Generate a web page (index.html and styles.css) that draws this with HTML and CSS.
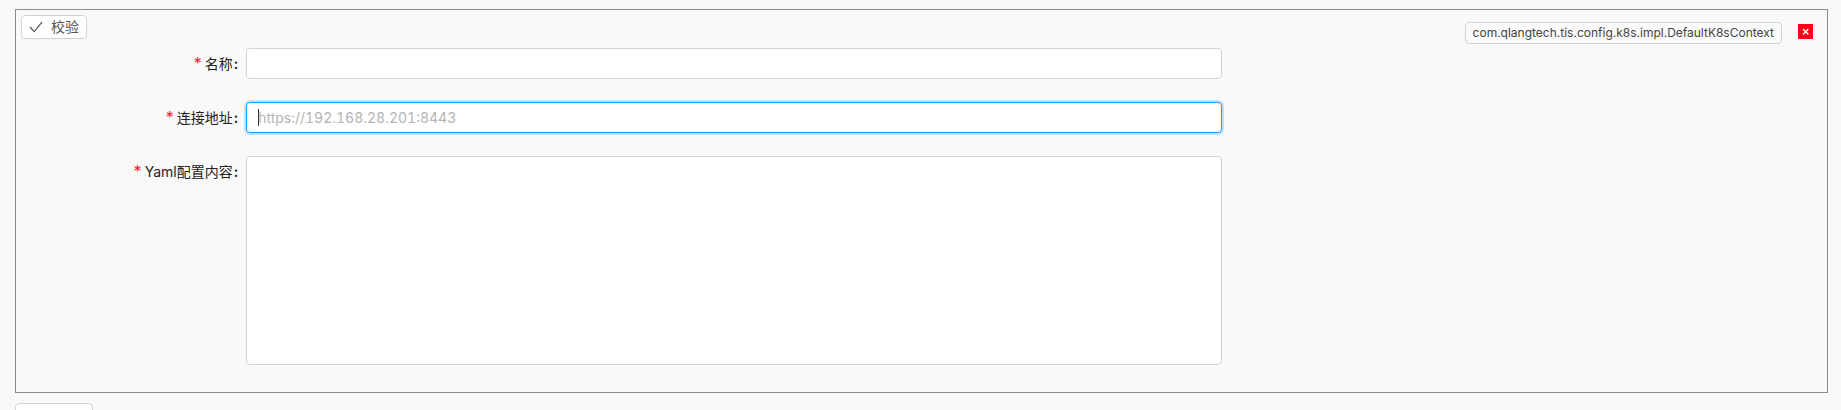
FILE: index.html
```html
<!DOCTYPE html>
<html lang="zh-CN">
<head>
<meta charset="utf-8">
<title>DefaultK8sContext</title>
<link rel="stylesheet" href="styles.css">
</head>
<body>
<main class="page">
  <form class="panel">
    <header class="toolbar">
      <button class="btn btn-small" type="button">
        <svg class="check" viewBox="0 0 14 14" aria-hidden="true"><path d="M1 7 5.2 11.6 13 2.2" fill="none" stroke="currentColor" stroke-width="1.2"/></svg>
        <span>校验</span>
      </button>
      <div class="meta">
        <span class="tag">com.qlangtech.tis.config.k8s.impl.DefaultK8sContext</span>
        <button class="remove" type="button">
          <svg viewBox="0 0 15 15" aria-hidden="true"><path d="M5 5 10.4 10.4M10.4 5 5 10.4" fill="none" stroke="currentColor" stroke-width="1.4"/></svg>
        </button>
      </div>
    </header>
    <div class="fields">
      <div class="row">
        <label class="label" for="name"><span class="required">*</span><span>名称</span><span class="colon">:</span></label>
        <input class="control" id="name" type="text">
      </div>
      <div class="row">
        <label class="label" for="url"><span class="required">*</span><span>连接地址</span><span class="colon">:</span></label>
        <input class="control control-active" id="url" type="text" placeholder="https://192.168.28.201:8443">
      </div>
      <div class="row">
        <label class="label" for="yaml"><span class="required">*</span><span>Yaml配置内容</span><span class="colon">:</span></label>
        <textarea class="control control-area" id="yaml"></textarea>
      </div>
    </div>
  </form>
  <button class="btn btn-default" type="button"></button>
</main>
</body>
</html>
```
FILE: styles.css
```css
* {
  box-sizing: border-box;
}

body {
  margin: 0;
  overflow: hidden;
  background: #f9f9f9;
  color: #222;
  font: 14px/22px Inter, "Noto Sans CJK SC", sans-serif;
}

.page {
  display: flex;
  flex-direction: column;
  align-items: flex-start;
  gap: 10px;
  padding: 9px 13px 9px 15px;
}

.panel {
  width: 100%;
  padding: 5px 5px 27px;
  border: 1px solid #8c8c8c;
}

.toolbar {
  display: flex;
  align-items: flex-start;
  justify-content: space-between;
}

.btn {
  border: 1px solid #d4d4d4;
  border-radius: 4px;
  background: #fff;
  color: #555;
  font: inherit;
  box-shadow: 0 2px 0 rgba(0, 0, 0, 0.02);
}

.btn-small {
  display: flex;
  align-items: center;
  gap: 8px;
  height: 24px;
  padding: 0 7px;
}

.btn-default {
  width: 78px;
  height: 32px;
}

.check {
  width: 14px;
  height: 14px;
}

.meta {
  display: flex;
  align-items: flex-start;
  gap: 16px;
  margin: 7px 9px 0 0;
}

.tag {
  padding: 0 7px;
  border: 1px solid #d4d4d4;
  border-radius: 4px;
  background: #fafafa;
  color: #444;
  font-size: 12px;
  line-height: 20px;
}

.remove {
  width: 15px;
  height: 15px;
  margin-top: 2px;
  padding: 0;
  border: 0;
  background: #ff0018;
  color: #fff;
}

.remove svg {
  display: block;
}

.fields {
  display: grid;
  gap: 23px;
  margin-top: 4px;
}

.row {
  display: grid;
  grid-template-columns: 3fr 13fr 8fr;
  align-items: start;
}

.label {
  display: flex;
  justify-content: flex-end;
  padding-right: 8px;
  line-height: 31px;
}

.required {
  margin-right: 3px;
  color: #f5222d;
  font-size: 16px;
}

.colon {
  margin-left: 1px;
  font-weight: 600;
}

.control {
  display: block;
  width: 100%;
  height: 31px;
  padding: 4px 11px;
  border: 1px solid #d4d4d4;
  border-radius: 4px;
  outline: 0;
  background: #fff;
  color: #333;
  font: inherit;
  font-variant-numeric: tabular-nums;
}

.control::placeholder {
  color: #b4b4b4;
  opacity: 1;
}

.control-active {
  border-color: #1e9bff;
  background: linear-gradient(#333, #333) 11px 6px / 1px 17px no-repeat #fff;
  box-shadow: 0 0 0 2px rgba(24, 144, 255, 0.25);
}

.control-area {
  height: 209px;
  resize: none;
}
```
